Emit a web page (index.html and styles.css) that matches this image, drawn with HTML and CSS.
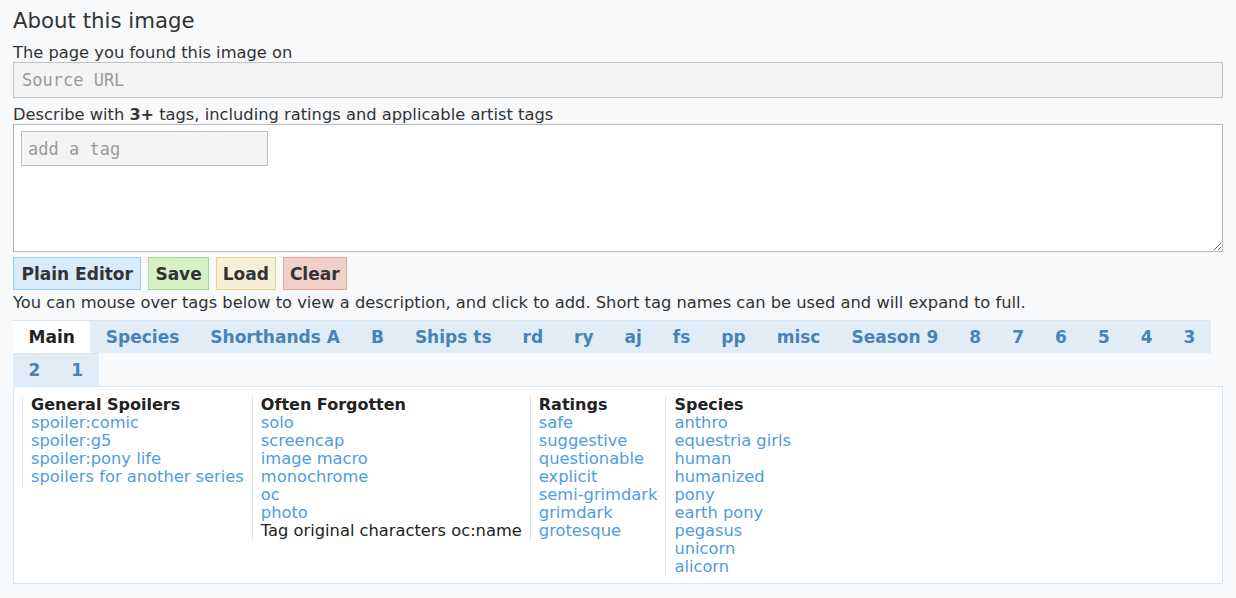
FILE: index.html
```html
<!DOCTYPE html>
<html>
<head>
<meta charset="utf-8">
<link rel="stylesheet" href="styles.css">
</head>
<body>
<div class="page">
  <h1 class="title">About this image</h1>
  <div class="label label-first">The page you found this image on</div>
  <input class="source" type="text" placeholder="Source URL">
  <div class="label">Describe with <b>3+</b> tags, including ratings and applicable artist tags</div>
  <div class="tagbox">
    <input class="taginput" type="text" placeholder="add a tag">
  </div>
  <div class="buttons">
    <span class="btn btn-blue">Plain Editor</span>
    <span class="btn btn-green">Save</span>
    <span class="btn btn-yellow">Load</span>
    <span class="btn btn-red">Clear</span>
  </div>
  <div class="help">You can mouse over tags below to view a description, and click to add. Short tag names can be used and will expand to full.</div>
  <div class="tabs">
    <span class="tab active">Main</span>
    <span class="tab">Species</span>
    <span class="tab">Shorthands A</span>
    <span class="tab">B</span>
    <span class="tab">Ships ts</span>
    <span class="tab">rd</span>
    <span class="tab">ry</span>
    <span class="tab">aj</span>
    <span class="tab">fs</span>
    <span class="tab">pp</span>
    <span class="tab">misc</span>
    <span class="tab">Season 9</span>
    <span class="tab">8</span>
    <span class="tab">7</span>
    <span class="tab">6</span>
    <span class="tab">5</span>
    <span class="tab">4</span>
    <span class="tab">3</span>
    <span class="tab">2</span>
    <span class="tab">1</span>
  </div>
  <div class="panel">
    <div class="col">
      <div class="col-head">General Spoilers</div>
      <a class="tag">spoiler:comic</a>
      <a class="tag">spoiler:g5</a>
      <a class="tag">spoiler:pony life</a>
      <a class="tag">spoilers for another series</a>
    </div>
    <div class="col">
      <div class="col-head">Often Forgotten</div>
      <a class="tag">solo</a>
      <a class="tag">screencap</a>
      <a class="tag">image macro</a>
      <a class="tag">monochrome</a>
      <a class="tag">oc</a>
      <a class="tag">photo</a>
      <div class="note">Tag original characters oc:name</div>
    </div>
    <div class="col">
      <div class="col-head">Ratings</div>
      <a class="tag">safe</a>
      <a class="tag">suggestive</a>
      <a class="tag">questionable</a>
      <a class="tag">explicit</a>
      <a class="tag">semi-grimdark</a>
      <a class="tag">grimdark</a>
      <a class="tag">grotesque</a>
    </div>
    <div class="col">
      <div class="col-head">Species</div>
      <a class="tag">anthro</a>
      <a class="tag">equestria girls</a>
      <a class="tag">human</a>
      <a class="tag">humanized</a>
      <a class="tag">pony</a>
      <a class="tag">earth pony</a>
      <a class="tag">pegasus</a>
      <a class="tag">unicorn</a>
      <a class="tag">alicorn</a>
    </div>
  </div>
</div>
</body>
</html>
```
FILE: styles.css
```css
html, body {
  margin: 0;
  padding: 0;
  background: #f7f9fb;
}
body {
  font-family: "DejaVu Sans", Verdana, sans-serif;
  font-size: 16.3px;
  line-height: 18px;
  color: #333;
}
.page {
  padding: 9px 13px 0 13px;
  display: flex;
  flex-direction: column;
}
.title {
  margin: 0;
  font-size: 21.3px;
  font-weight: normal;
  line-height: 24px;
  color: #333;
}
.label {
  margin-top: 8px;
  height: 18px;
}
.label-first {
  margin-top: 11px;
}
.label b {
  font-weight: bold;
  font-size: 16px;
}
.source {
  box-sizing: border-box;
  width: 100%;
  height: 36px;
  margin: 0;
  padding: 0 8px;
  border: 1px solid #c2c2c2;
  background: #f4f4f4;
  font-family: "DejaVu Sans Mono", monospace;
  font-size: 17px;
  color: #333;
  outline: none;
}
.source::placeholder, .taginput::placeholder {
  color: #9a9a9a;
}
.tagbox {
  box-sizing: border-box;
  height: 128px;
  margin-top: 0;
  padding: 6px 7px;
  border: 1px solid #b7b7b7;
  background: #fff;
  resize: vertical;
  overflow: auto;
}
.taginput {
  box-sizing: border-box;
  width: 247px;
  height: 35px;
  margin: 0;
  padding: 0 6px;
  border: 1px solid #bdbdbd;
  background: #f4f4f4;
  font-family: "DejaVu Sans Mono", monospace;
  font-size: 17px;
  outline: none;
}
.buttons {
  display: flex;
  gap: 7px;
  margin-top: 5px;
}
.btn {
  box-sizing: border-box;
  height: 33px;
  padding: 0 7px;
  display: flex;
  align-items: center;
  font-weight: bold;
  font-size: 17px;
  color: #333;
  border: 1px solid;
}
.btn-blue { background: #d7ebfa; border-color: #a1d0f2; padding: 0 7.5px; }
.btn-green { background: #d5f1c5; border-color: #a6db8e; padding: 0 6px; }
.btn-yellow { background: #f5f0d5; border-color: #e6d78c; padding: 0 6px; }
.btn-red { background: #f1d0ca; border-color: #e2a79d; padding: 0 6px; }
.help {
  margin-top: 4px;
  height: 18px;
}
.tabs {
  margin-top: 8px;
  display: flex;
  flex-wrap: wrap;
}
.tab {
  box-sizing: border-box;
  height: 33px;
  padding: 0 15.5px;
  display: flex;
  align-items: center;
  font-weight: bold;
  font-size: 17px;
  color: #4783b8;
  background: #e1edf6;
  border-top: 1px solid #d5e5f2;
}
.tab.active {
  background: #fff;
  color: #222;
}
.panel {
  box-sizing: border-box;
  display: flex;
  padding: 9px 8px 6px 8px;
  border: 1px solid #d6e6f3;
  background: #fff;
  height: 198px;
  align-items: flex-start;
}
.col {
  display: flex;
  flex-direction: column;
  border-left: 1px solid #d6e6f3;
  padding: 0 8px;
}
.col-head {
  font-weight: bold;
  font-size: 16px;
  color: #222;
}
.tag {
  color: #4f9ddf;
  cursor: pointer;
}
.note {
  color: #222;
}
```
